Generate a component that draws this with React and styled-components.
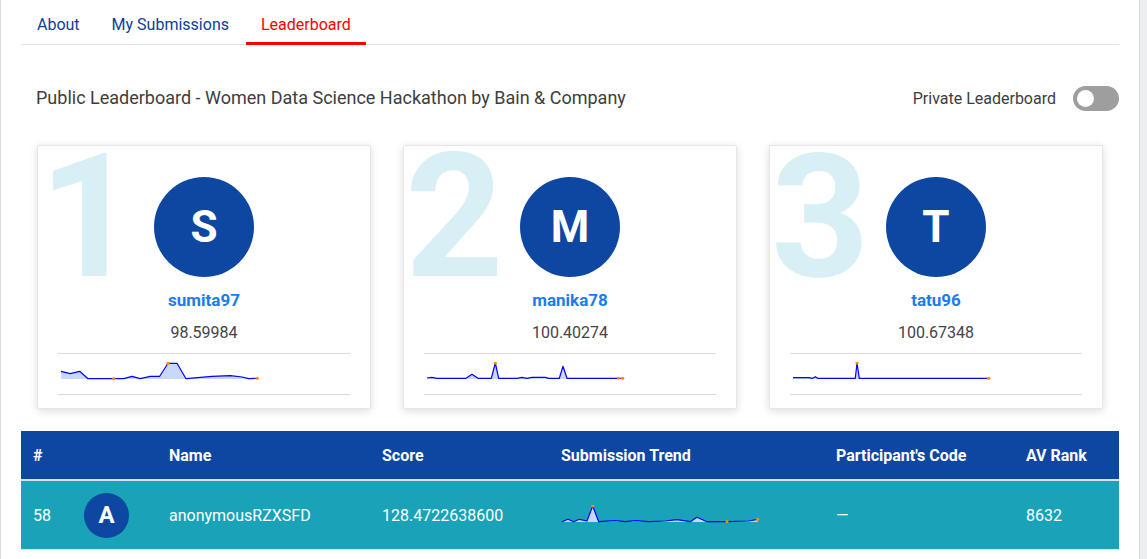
import React from "react";
import styled, { createGlobalStyle } from "styled-components";

const GlobalStyle = createGlobalStyle`
  html, body {
    margin: 0;
    padding: 0;
    background: #eceef1;
    font-family: Roboto, "Liberation Sans", Arial, sans-serif;
  }
  * {
    box-sizing: border-box;
  }
`;

const Panel = styled.div`
  width: 1140px;
  min-height: 100vh;
  background: #ffffff;
  border-left: 1px solid #dcdcdc;
  border-right: 1px solid #d6d9dd;
  padding: 0 20px;
`;

const TabBar = styled.div`
  display: flex;
  gap: 2px;
  padding-left: 1px;
  border-bottom: 1px solid #dee2e6;
`;

const Tab = styled.div`
  padding: 15px 15px 8px;
  font-size: 16px;
  line-height: 19px;
  color: ${(p) => (p.$active ? "#ff0000" : "#0d3d9a")};
  border-bottom: 3px solid ${(p) => (p.$active ? "#ff0000" : "transparent")};
  margin-bottom: -1px;
  cursor: pointer;
`;

const TitleRow = styled.div`
  display: flex;
  align-items: center;
  justify-content: space-between;
  padding: 41px 0 34px 15px;
`;

const Title = styled.h2`
  margin: 0 0 2px;
  font-size: 18px;
  font-weight: 400;
  color: #3d3d3d;
`;

const PrivateSwitch = styled.div`
  display: flex;
  align-items: center;
  gap: 17px;
  font-size: 16px;
  color: #3d3d3d;
`;

const Track = styled.div`
  width: 46px;
  height: 25px;
  border-radius: 13px;
  background: #9e9e9e;
  display: flex;
  align-items: center;
  padding-left: 4px;
`;

const Knob = styled.div`
  width: 17px;
  height: 17px;
  border-radius: 50%;
  background: #ffffff;
`;

const Podium = styled.div`
  display: grid;
  grid-template-columns: repeat(3, 334px);
  gap: 32px;
  padding: 0 16px;
`;

const Card = styled.div`
  position: relative;
  height: 264px;
  background: #ffffff;
  border: 1px solid #e6e6e6;
  border-radius: 2px;
  box-shadow: 0 2px 8px rgba(0, 0, 0, 0.14);
  padding: 31px 20px 13px;
  display: flex;
  flex-direction: column;
  align-items: center;
`;

const BigRank = styled.div`
  position: absolute;
  left: 1px;
  top: 7px;
  font-size: 172px;
  line-height: 0.75;
  font-weight: 700;
  color: #d8eff6;
  z-index: 0;
  user-select: none;
`;

const Avatar = styled.div`
  position: relative;
  z-index: 1;
  width: ${(p) => p.$size}px;
  height: ${(p) => p.$size}px;
  flex-shrink: 0;
  border-radius: 50%;
  background: #0e47a1;
  color: #ffffff;
  font-weight: 700;
  font-size: ${(p) => p.$font}px;
  display: flex;
  align-items: center;
  justify-content: center;
`;

const UserName = styled.div`
  margin-top: 12px;
  font-size: 17px;
  line-height: 22px;
  font-weight: 700;
  color: #1b7cf0;
`;

const Score = styled.div`
  margin-top: 12px;
  font-size: 16px;
  line-height: 20px;
  color: #444444;
`;

const TrendBox = styled.div`
  align-self: stretch;
  margin-top: 10px;
  height: 42px;
  border-top: 1px solid #d9d9d9;
  border-bottom: 1px solid #d9d9d9;
  padding: 8px 0 0 2px;
`;

const Table = styled.div`
  margin-top: 22px;
  border-bottom: 1px solid #dee2e6;
`;

const TableRow = styled.div`
  display: grid;
  grid-template-columns: 51px 85px 213px 179px 275px 190px 105px;
  align-items: center;
  height: ${(p) => (p.$head ? 50 : 68)}px;
  background: ${(p) => (p.$head ? "#0e47a1" : "#19a2b8")};
  border-bottom: ${(p) => (p.$head ? "2px solid #dde3ea" : "none")};
  color: #ffffff;
  font-size: 16px;
  font-weight: ${(p) => (p.$head ? 700 : 400)};
`;

const Cell = styled.div`
  padding: 0 12px;
  white-space: nowrap;
  display: flex;
  align-items: center;
`;

function Sparkline({ points, dots }) {
  const base = 17;
  const line = points.map(([x, y]) => `${x},${y}`).join(" ");
  const first = points[0];
  const last = points[points.length - 1];
  const area = `${first[0]},${base} ${line} ${last[0]},${base}`;
  return (
    <svg width="200" height="20" viewBox="-1 0 200 20" style={{ display: "block" }}>
      <polygon points={area} fill="#c9d7f8" stroke="none" />
      <polyline points={line} fill="none" stroke="#0000ff" strokeWidth="1.2" strokeLinejoin="round" />
      {dots.map(([x, y], i) => (
        <circle key={i} cx={x} cy={y} r="1.6" fill="#ff8c00" />
      ))}
    </svg>
  );
}

const leaders = [
  {
    rank: 1,
    initial: "S",
    name: "sumita97",
    score: "98.59984",
    points: [
      [0, 9.3], [9.3, 11.7], [18.7, 9.3], [27, 16.7], [52.7, 16.7], [62.7, 16.7],
      [71, 14.3], [79.3, 16.7], [89.3, 14.3], [98.7, 14.3], [107, 1.3], [116, 1.3],
      [125, 16.7], [151, 14.3], [169.3, 13.7], [181, 15], [187.7, 16.7], [196.3, 16.3],
    ],
    dots: [[52.7, 16.7], [107, 1.3], [196.3, 16.3]],
  },
  {
    rank: 2,
    initial: "M",
    name: "manika78",
    score: "100.40274",
    points: [
      [0, 16], [5, 15.3], [10, 16.3], [39, 16.3], [45, 12.3], [51, 16.3], [64.3, 16.3],
      [68.3, 1], [71.7, 16.3], [90, 16.3], [95, 15.3], [100, 16.3], [105, 15.3],
      [118.3, 15.3], [121.7, 16.3], [132.3, 16.3], [136, 4.3], [140, 16.3],
      [191.7, 16.3], [195.7, 16.3],
    ],
    dots: [[68.3, 1], [191.7, 16.3], [195.7, 16.3]],
  },
  {
    rank: 3,
    initial: "T",
    name: "tatu96",
    score: "100.67348",
    points: [
      [0, 15.7], [15.7, 15.7], [19.7, 16.3], [22.3, 14.7], [24.7, 16.3], [62.3, 16.3],
      [64, 1], [66.3, 16.3], [195.7, 16.3],
    ],
    dots: [[64, 1], [195.7, 16.3]],
  },
];

const myTrend = {
  points: [
    [0, 16.7], [6, 14.3], [11.7, 16.7], [17.3, 14.3], [25, 16], [30.7, 1], [36.7, 16.7],
    [53.3, 15.7], [63.3, 16.7], [73.3, 15.7], [86.7, 16.7], [103.3, 16], [115, 14.7],
    [128.3, 16.7], [135, 12.3], [145, 16.7], [165, 16.7], [186.7, 16], [195.7, 14.3],
  ],
  dots: [[30.7, 1], [165, 16.7], [195.7, 14.3]],
};

export default function App() {
  return (
    <>
      <GlobalStyle />
      <Panel>
        <TabBar>
          <Tab>About</Tab>
          <Tab>My Submissions</Tab>
          <Tab $active>Leaderboard</Tab>
        </TabBar>

        <TitleRow>
          <Title>Public Leaderboard - Women Data Science Hackathon by Bain &amp; Company</Title>
          <PrivateSwitch>
            Private Leaderboard
            <Track>
              <Knob />
            </Track>
          </PrivateSwitch>
        </TitleRow>

        <Podium>
          {leaders.map((l) => (
            <Card key={l.rank}>
              <BigRank>{l.rank}</BigRank>
              <Avatar $size={100} $font={44}>{l.initial}</Avatar>
              <UserName>{l.name}</UserName>
              <Score>{l.score}</Score>
              <TrendBox>
                <Sparkline points={l.points} dots={l.dots} />
              </TrendBox>
            </Card>
          ))}
        </Podium>

        <Table>
          <TableRow $head>
            <Cell>#</Cell>
            <Cell />
            <Cell>Name</Cell>
            <Cell>Score</Cell>
            <Cell>Submission Trend</Cell>
            <Cell>Participant's Code</Cell>
            <Cell>AV Rank</Cell>
          </TableRow>
          <TableRow>
            <Cell>58</Cell>
            <Cell>
              <Avatar $size={45} $font={24}>A</Avatar>
            </Cell>
            <Cell>anonymousRZXSFD</Cell>
            <Cell>128.4722638600</Cell>
            <Cell>
              <Sparkline points={myTrend.points} dots={myTrend.dots} />
            </Cell>
            <Cell>—</Cell>
            <Cell>8632</Cell>
          </TableRow>
        </Table>
      </Panel>
    </>
  );
}
